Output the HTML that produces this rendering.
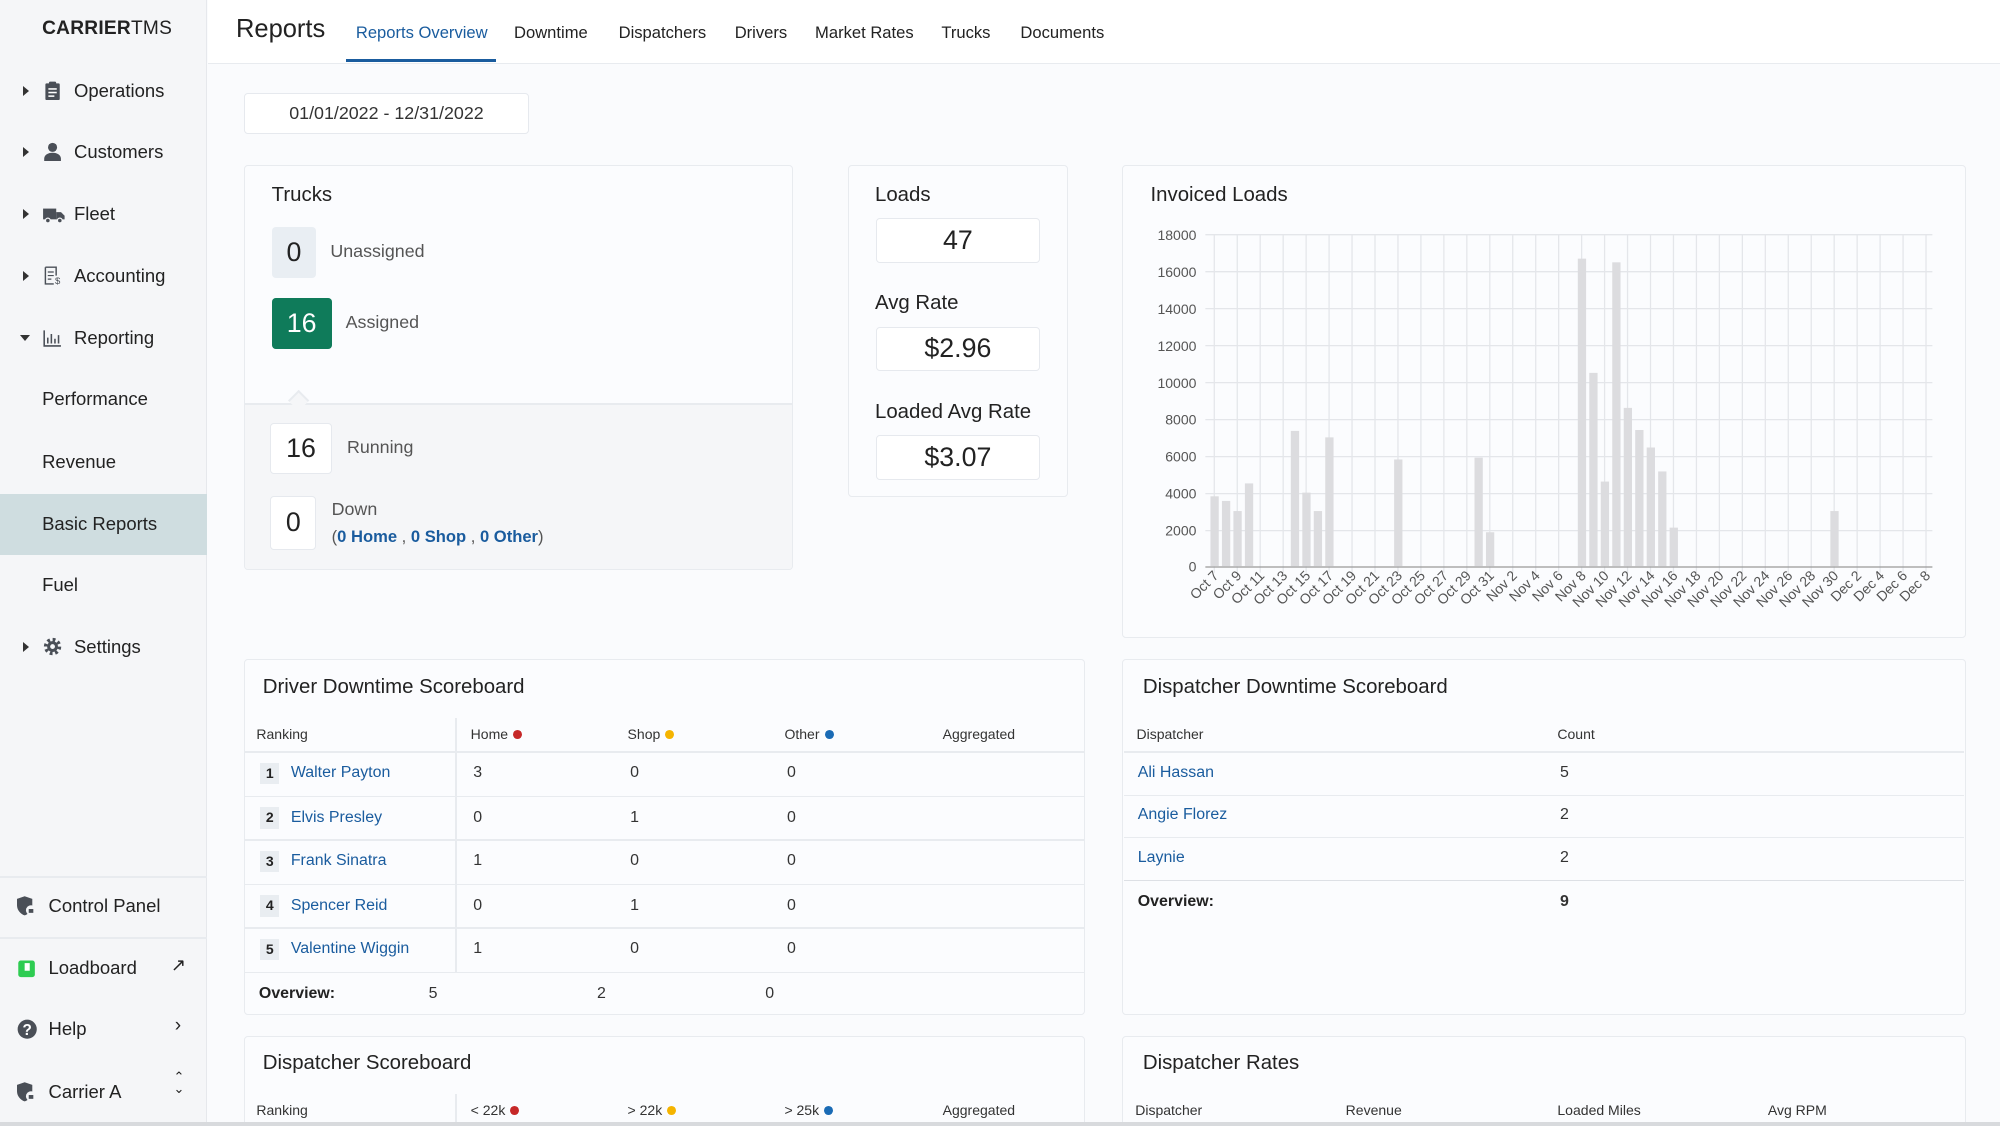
<!DOCTYPE html>
<html><head><meta charset="utf-8">
<style>
html{zoom:1.27551;background:#fafbfd;overflow:hidden;height:883px}
*{box-sizing:border-box;margin:0;padding:0}
body{width:1568px;height:883px;overflow:hidden;background:#fafbfd;font-family:"Liberation Sans",Arial,sans-serif;color:#222;position:relative}
#wrap{position:relative;width:1568px;height:883px;overflow:hidden}
.a{position:absolute;white-space:nowrap}
#side{position:absolute;left:0;top:0;width:162px;height:883px;background:#f5f6f8;border-right:1px solid #e6e8ec}
.nav{position:absolute;left:0;width:162px;height:48px;font-size:14.5px;color:#222;display:flex;align-items:center}
.tri{position:absolute;left:18px;width:0;height:0;border-top:4px solid transparent;border-bottom:4px solid transparent;border-left:5px solid #333}
.ico{position:absolute;left:34px;width:15px;height:15px}
.card{position:absolute;background:#fbfcfe;border:1px solid #e8ebef;border-radius:3px}
.box{position:absolute;border:1px solid #e6e9ee;background:#fff;border-radius:3px;display:flex;align-items:center;justify-content:center;font-size:21px}
.th{font-size:11px;color:#333}
.td{font-size:12.5px;color:#333}
.a.lnk,.lnk{color:#1a5c9e}
.rk{position:absolute;left:204px;width:15px;height:17px;background:#e9edf1;font-size:11px;font-weight:bold;text-align:center;line-height:17px}
.hl{position:absolute;height:1px;background:#e8ebef}
.dot{display:inline-block;width:7px;height:7px;border-radius:50%;margin-left:4px;vertical-align:0}
</style></head><body><div id="wrap">
<div id="side">
 <div class="a" style="left:33px;top:14px;font-size:15px;letter-spacing:0.2px"><b>CARRIER</b>TMS</div>
 <div class="nav" style="top:47px"><span class="tri"></span><svg class="ico" viewBox="0 0 16 16"><rect x="2" y="2" width="12" height="14" rx="1" fill="#4a4f57"/><rect x="5" y="0.5" width="6" height="3" rx="1" fill="#4a4f57"/><rect x="4.5" y="6" width="7" height="1.3" fill="#fff"/><rect x="4.5" y="9" width="7" height="1.3" fill="#fff"/><rect x="4.5" y="12" width="5" height="1.3" fill="#fff"/></svg><span style="margin-left:58px">Operations</span></div>
 <div class="nav" style="top:95px"><span class="tri"></span><svg class="ico" viewBox="0 0 16 16"><circle cx="8" cy="4.5" r="3.8" fill="#4a4f57"/><path d="M1 16v-2c0-3 3-5 7-5s7 2 7 5v2z" fill="#4a4f57"/></svg><span style="margin-left:58px">Customers</span></div>
 <div class="nav" style="top:144px"><span class="tri"></span><svg class="ico" viewBox="0 0 18 16" style="width:17px"><rect x="0" y="3" width="11" height="9" fill="#4a4f57"/><path d="M11 6h4l3 3v3h-7z" fill="#4a4f57"/><circle cx="4" cy="13" r="2" fill="#4a4f57" stroke="#f5f6f8"/><circle cx="14" cy="13" r="2" fill="#4a4f57" stroke="#f5f6f8"/></svg><span style="margin-left:58px">Fleet</span></div>
 <div class="nav" style="top:192px"><span class="tri"></span><svg class="ico" viewBox="0 0 16 16"><path d="M2 1h9v7M2 1v14h7" fill="none" stroke="#4a4f57" stroke-width="1.2"/><path d="M4 5h5M4 8h5M4 11h3" stroke="#4a4f57"/><text x="10" y="15" font-size="8" fill="#4a4f57" font-family="Liberation Sans">$</text></svg><span style="margin-left:58px">Accounting</span></div>
 <div class="nav" style="top:241px"><span class="tri" style="left:16px;border-left:4px solid transparent;border-right:4px solid transparent;border-top:5px solid #333;border-bottom:0"></span><svg class="ico" viewBox="0 0 16 16"><path d="M1 2v13h14" fill="none" stroke="#4a4f57" stroke-width="1.3"/><path d="M4 13V8M7 13V5M10 13V9M13 13V6" stroke="#4a4f57" stroke-width="1.3"/></svg><span style="margin-left:58px">Reporting</span></div>
 <div class="nav" style="top:289px"><span style="margin-left:33px">Performance</span></div>
 <div class="nav" style="top:338px"><span style="margin-left:33px">Revenue</span></div>
 <div class="nav" style="top:387px;background:#cfdde0"><span style="margin-left:33px">Basic Reports</span></div>
 <div class="nav" style="top:435px"><span style="margin-left:33px">Fuel</span></div>
 <div class="nav" style="top:483px"><span class="tri"></span><svg class="ico" viewBox="0 0 16 16"><circle cx="8" cy="8" r="5.5" fill="none" stroke="#4a4f57" stroke-width="3.5" stroke-dasharray="2.2 2.1"/><circle cx="8" cy="8" r="4.5" fill="#4a4f57"/><circle cx="8" cy="8" r="2" fill="#f5f6f8"/></svg><span style="margin-left:58px">Settings</span></div>
 <div class="hl" style="left:0;width:162px;top:687px"></div>
 <div class="hl" style="left:0;width:162px;top:735px"></div>
 <div class="nav" style="top:686px"><svg class="ico" style="left:13px;width:16px;height:17px" viewBox="0 0 16 17"><path d="M6 1l6 2v5c0 4-3 7-6 8-3-1-6-4-6-8V3z" fill="#4a4f57"/><circle cx="11" cy="12" r="4" fill="#f5f6f8"/><rect x="9.2" y="11" width="3.6" height="3" fill="#4a4f57"/></svg><span style="margin-left:38px">Control Panel</span></div>
 <div class="nav" style="top:735px"><svg class="ico" style="left:13px;width:15px;height:16px" viewBox="0 0 15 16"><rect x="1" y="2" width="13" height="13" rx="2" fill="#2ecc52"/><rect x="6" y="4" width="4" height="6" fill="#fff"/></svg><span style="margin-left:38px">Loadboard</span><span class="a" style="left:134px;top:14px;font-size:14px">&#8599;</span></div>
 <div class="nav" style="top:783px"><svg class="ico" style="left:13px;width:16px;height:16px" viewBox="0 0 16 16"><circle cx="8" cy="8" r="7.5" fill="#4a4f57"/><text x="8" y="12.5" text-anchor="middle" font-size="12" font-weight="bold" fill="#fff" font-family="Liberation Sans">?</text></svg><span style="margin-left:38px">Help</span><span class="a" style="left:137px;top:13px;font-size:15px">&#8250;</span></div>
 <div class="nav" style="top:832px"><svg class="ico" style="left:13px;width:16px;height:17px" viewBox="0 0 16 17"><path d="M6 1l6 2v5c0 4-3 7-6 8-3-1-6-4-6-8V3z" fill="#4a4f57"/><circle cx="11" cy="12" r="4" fill="#f5f6f8"/><rect x="9.2" y="11" width="3.6" height="3" fill="#4a4f57"/></svg><span style="margin-left:38px">Carrier A</span><span class="a" style="left:136px;top:8px;font-size:10px;line-height:9px">&#8963;<br>&#8964;</span></div>
</div>
<div class="a" style="left:163px;top:0;width:1405px;height:50px;background:#fff;border-bottom:1px solid #e8ebef"></div>
<div class="a" style="left:185px;top:12px;font-size:20px">Reports</div>
<div class="a" style="top:18px;left:279px;font-size:13px;color:#1a5c9e">Reports Overview</div>
<div class="a" style="left:271px;top:46px;width:118px;height:3px;background:#1a5c9e"></div>
<div class="a" style="top:18px;left:403px;font-size:13px">Downtime</div>
<div class="a" style="top:18px;left:485px;font-size:13px">Dispatchers</div>
<div class="a" style="top:18px;left:576px;font-size:13px">Drivers</div>
<div class="a" style="top:18px;left:639px;font-size:13px">Market Rates</div>
<div class="a" style="top:18px;left:738px;font-size:13px">Trucks</div>
<div class="a" style="top:18px;left:800px;font-size:13px">Documents</div>

<div class="box" style="left:191px;top:73px;width:224px;height:32px;font-size:14px;color:#333">01/01/2022 - 12/31/2022</div>

<div class="card" style="left:191px;top:129px;width:431px;height:318px;overflow:hidden">
 <div class="a" style="left:0;top:186px;width:431px;height:132px;background:#f5f6f8;border-top:2px solid #e8ebef"></div>
 <div class="a" style="left:36px;top:178px;width:12px;height:12px;background:#f5f6f8;border-left:2px solid #e8ebef;border-top:2px solid #e8ebef;transform:rotate(45deg)"></div>
</div>
<div class="a" style="left:213px;top:144px;font-size:16px">Trucks</div>
<div class="box" style="left:213px;top:178px;width:35px;height:40px;background:#e9eef3;border:0">0</div>
<div class="a" style="left:259px;top:189px;font-size:14px;color:#555">Unassigned</div>
<div class="box" style="left:213px;top:234px;width:47px;height:40px;background:#0f7b5a;color:#fff;border:0">16</div>
<div class="a" style="left:271px;top:245px;font-size:14px;color:#555">Assigned</div>
<div class="box" style="left:212px;top:332px;width:48px;height:40px">16</div>
<div class="a" style="left:272px;top:343px;font-size:14px;color:#555">Running</div>
<div class="box" style="left:212px;top:389px;width:36px;height:42px">0</div>
<div class="a" style="left:260px;top:391px;font-size:14px;color:#555">Down</div>
<div class="a" style="left:260px;top:413px;font-size:13px;color:#555">(<b class="lnk">0 Home</b> , <b class="lnk">0 Shop</b> , <b class="lnk">0 Other</b>)</div>

<div class="card" style="left:665px;top:129px;width:172px;height:261px"></div>
<div class="a" style="left:686px;top:144px;font-size:16px">Loads</div>
<div class="box" style="left:687px;top:171px;width:128px;height:35px">47</div>
<div class="a" style="left:686px;top:229px;font-size:16px">Avg Rate</div>
<div class="box" style="left:687px;top:256px;width:128px;height:35px">$2.96</div>
<div class="a" style="left:686px;top:314px;font-size:16px">Loaded Avg Rate</div>
<div class="box" style="left:687px;top:341px;width:128px;height:35px">$3.07</div>

<div class="card" style="left:880px;top:129px;width:661px;height:371px"></div>
<div class="a" style="left:902px;top:144px;font-size:16px">Invoiced Loads</div>
<svg class="a" style="left:0;top:0" width="1568" height="883" font-family="Liberation Sans" font-size="11" fill="#555">
<g stroke="#e4e6ea" stroke-width="1">
<line x1="945" x2="1515" y1="184" y2="184"/><line x1="945" x2="1515" y1="213" y2="213"/><line x1="945" x2="1515" y1="242" y2="242"/><line x1="945" x2="1515" y1="271" y2="271"/><line x1="945" x2="1515" y1="300" y2="300"/><line x1="945" x2="1515" y1="329" y2="329"/><line x1="945" x2="1515" y1="358" y2="358"/><line x1="945" x2="1515" y1="387" y2="387"/><line x1="945" x2="1515" y1="416" y2="416"/>
</g>
<g id="vg" stroke="#e4e6ea"></g>
<line x1="945" x2="1515" y1="444.5" y2="444.5" stroke="#999"/>
<g text-anchor="end">
<text x="938" y="188">18000</text><text x="938" y="217">16000</text><text x="938" y="246">14000</text><text x="938" y="275">12000</text><text x="938" y="304">10000</text><text x="938" y="333">8000</text><text x="938" y="362">6000</text><text x="938" y="391">4000</text><text x="938" y="420">2000</text><text x="938" y="448">0</text>
</g>
<g id="bars" fill="#dcdcdf"></g>
<g id="xl" text-anchor="end" font-size="11" fill="#555"></g>
</svg>

<div class="card" style="left:191px;top:517px;width:660px;height:279px"></div>
<div class="a" style="left:206px;top:530px;font-size:16px">Driver Downtime Scoreboard</div>
<div class="a" style="left:357px;top:563px;width:1px;height:200px;background:#e8ebef"></div>
<div class="a th" style="left:201px;top:569px">Ranking</div>
<div class="a th" style="left:369px;top:569px">Home<span class="dot" style="background:#c62828"></span></div>
<div class="a th" style="left:492px;top:569px">Shop<span class="dot" style="background:#f5b400"></span></div>
<div class="a th" style="left:615px;top:569px">Other<span class="dot" style="background:#1a6bb5"></span></div>
<div class="a th" style="left:739px;top:569px">Aggregated</div>
<div class="hl" style="left:192px;width:658px;top:589px"></div>
<div class="hl" style="left:192px;width:658px;top:624px"></div>
<div class="hl" style="left:192px;width:658px;top:658px"></div>
<div class="hl" style="left:192px;width:658px;top:693px"></div>
<div class="hl" style="left:192px;width:658px;top:727px"></div>
<div class="hl" style="left:192px;width:658px;top:762px"></div>
<div class="rk" style="top:598px">1</div><div class="a td lnk" style="left:228px;top:599px">Walter Payton</div><div class="a td" style="left:371px;top:599px">3</div><div class="a td" style="left:494px;top:599px">0</div><div class="a td" style="left:617px;top:599px">0</div>
<div class="rk" style="top:633px">2</div><div class="a td lnk" style="left:228px;top:634px">Elvis Presley</div><div class="a td" style="left:371px;top:634px">0</div><div class="a td" style="left:494px;top:634px">1</div><div class="a td" style="left:617px;top:634px">0</div>
<div class="rk" style="top:667px">3</div><div class="a td lnk" style="left:228px;top:668px">Frank Sinatra</div><div class="a td" style="left:371px;top:668px">1</div><div class="a td" style="left:494px;top:668px">0</div><div class="a td" style="left:617px;top:668px">0</div>
<div class="rk" style="top:702px">4</div><div class="a td lnk" style="left:228px;top:703px">Spencer Reid</div><div class="a td" style="left:371px;top:703px">0</div><div class="a td" style="left:494px;top:703px">1</div><div class="a td" style="left:617px;top:703px">0</div>
<div class="rk" style="top:736px">5</div><div class="a td lnk" style="left:228px;top:737px">Valentine Wiggin</div><div class="a td" style="left:371px;top:737px">1</div><div class="a td" style="left:494px;top:737px">0</div><div class="a td" style="left:617px;top:737px">0</div>
<div class="a td" style="left:203px;top:772px;font-weight:bold;color:#222">Overview:</div>
<div class="a td" style="left:336px;top:772px">5</div><div class="a td" style="left:468px;top:772px">2</div><div class="a td" style="left:600px;top:772px">0</div>

<div class="card" style="left:880px;top:517px;width:661px;height:279px"></div>
<div class="a" style="left:896px;top:530px;font-size:16px">Dispatcher Downtime Scoreboard</div>
<div class="a th" style="left:891px;top:569px">Dispatcher</div>
<div class="a th" style="left:1221px;top:569px">Count</div>
<div class="hl" style="left:881px;width:659px;top:589px"></div>
<div class="hl" style="left:881px;width:659px;top:623px"></div>
<div class="hl" style="left:881px;width:659px;top:656px"></div>
<div class="hl" style="left:881px;width:659px;top:690px;background:#dde0e5"></div>
<div class="a td lnk" style="left:892px;top:599px">Ali Hassan</div><div class="a td" style="left:1223px;top:599px">5</div>
<div class="a td lnk" style="left:892px;top:632px">Angie Florez</div><div class="a td" style="left:1223px;top:632px">2</div>
<div class="a td lnk" style="left:892px;top:666px">Laynie</div><div class="a td" style="left:1223px;top:666px">2</div>
<div class="a td" style="left:892px;top:700px;font-weight:bold;color:#222">Overview:</div><div class="a td" style="left:1223px;top:700px;font-weight:bold">9</div>

<div class="card" style="left:191px;top:812px;width:660px;height:80px"></div>
<div class="a" style="left:206px;top:825px;font-size:16px">Dispatcher Scoreboard</div>
<div class="a" style="left:357px;top:858px;width:1px;height:30px;background:#e8ebef"></div>
<div class="a th" style="left:201px;top:864px">Ranking</div>
<div class="a th" style="left:369px;top:864px">&lt; 22k<span class="dot" style="background:#c62828"></span></div>
<div class="a th" style="left:492px;top:864px">&gt; 22k<span class="dot" style="background:#f5b400"></span></div>
<div class="a th" style="left:615px;top:864px">&gt; 25k<span class="dot" style="background:#1a6bb5"></span></div>
<div class="a th" style="left:739px;top:864px">Aggregated</div>
<div class="card" style="left:880px;top:812px;width:661px;height:80px"></div>
<div class="a" style="left:896px;top:825px;font-size:16px">Dispatcher Rates</div>
<div class="a th" style="left:890px;top:864px">Dispatcher</div>
<div class="a th" style="left:1055px;top:864px">Revenue</div>
<div class="a th" style="left:1221px;top:864px">Loaded Miles</div>
<div class="a th" style="left:1386px;top:864px">Avg RPM</div>
<div class="a" style="left:0;top:880px;width:1568px;height:3px;background:#d8dadd"></div>
</div>
<script>
(function(){
var NS="http://www.w3.org/2000/svg";
var bars={0:3800,1:3550,2:3000,3:4500,7:7350,8:4000,9:3000,10:7000,16:5800,23:5900,24:1850,32:16700,33:10500,34:4600,35:16500,36:8600,37:7400,38:6450,39:5150,40:2100,54:3000};
var bg=document.getElementById("bars");
for(var k in bars){var v=bars[k];var x=949+9*k;var h=v*260/18000;var r=document.createElementNS(NS,"rect");r.setAttribute("x",x);r.setAttribute("y",444-h);r.setAttribute("width",6.5);r.setAttribute("height",h);bg.appendChild(r);}
var labels=[];
for(var d=7;d<=31;d+=2)labels.push("Oct "+d);
for(var d=2;d<=30;d+=2)labels.push("Nov "+d);
for(var d=2;d<=8;d+=2)labels.push("Dec "+d);
var vg=document.getElementById("vg"),xl=document.getElementById("xl");
for(var i=0;i<labels.length;i++){
 var day=i*2;
 var x=952+9*day;
 var l=document.createElementNS(NS,"line");l.setAttribute("x1",x);l.setAttribute("x2",x);l.setAttribute("y1",184);l.setAttribute("y2",449);vg.appendChild(l);
 var t=document.createElementNS(NS,"text");t.setAttribute("transform","translate("+(x+4)+",452) rotate(-45)");t.textContent=labels[i];xl.appendChild(t);
}
})();
</script>
</body></html>
